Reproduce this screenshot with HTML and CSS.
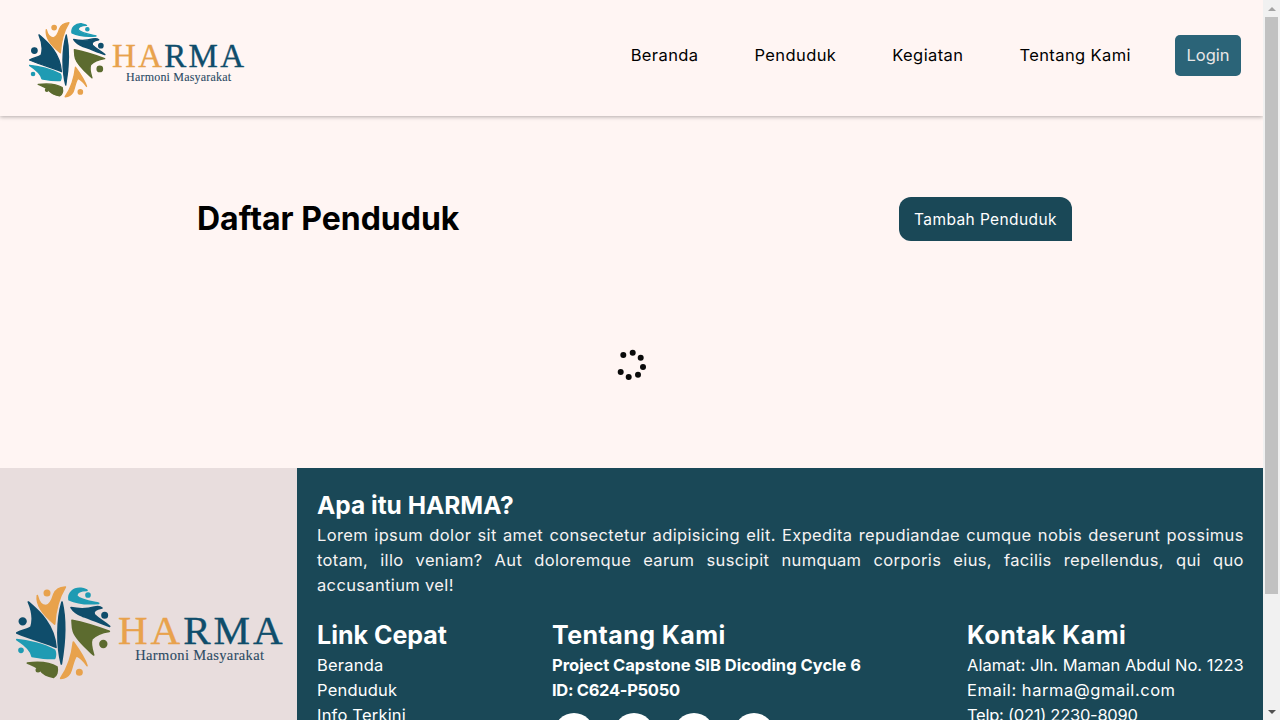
FILE: index.html
```html
<!DOCTYPE html>
<html lang="id">
<head>
<meta charset="utf-8">
<title>HARMA - Daftar Penduduk</title>
<link rel="stylesheet" href="styles.css">
</head>
<body>
<svg class="defs" width="0" height="0" aria-hidden="true">
  <symbol id="mark" viewBox="50 50 285 280">
    <g fill="#0f4d6b" stroke="#0f4d6b" stroke-width="5" stroke-linejoin="round">
      <path d="M188 97C198 140 202 190 186 283C172 230 172 150 188 97Z"/>
      <path d="M215 114C235 118 260 120 285 112C295 110 305 112 308 115C290 118 280 125 285 135C300 150 315 155 331 170C300 160 270 145 250 140C235 135 222 125 215 114Z"/>
      <path d="M87 97C120 125 165 165 170 233C140 220 100 210 52 190C65 182 85 180 95 172C102 150 97 120 87 97Z"/>
      <circle cx="316" cy="137" r="8"/><circle cx="70" cy="155" r="10"/>
    </g>
    <g fill="#e8a24c" stroke="#e8a24c" stroke-width="5" stroke-linejoin="round">
      <path d="M198 52C180 54 170 58 163 75C158 92 152 105 140 108C128 108 118 95 114 78C110 105 125 130 166 163C168 130 175 90 198 52Z"/>
      <path d="M222 217C235 235 255 262 263 288C255 275 240 262 232 258C222 268 218 300 212 310C205 322 195 325 184 326C205 295 218 255 222 217Z"/>
      <circle cx="143" cy="70" r="8"/><circle cx="240" cy="308" r="8"/>
    </g>
    <g fill="#1f9bb3" stroke="#1f9bb3" stroke-width="5" stroke-linejoin="round">
      <path d="M209 90C206 70 222 54 245 56C255 58 262 60 263 62C245 62 232 68 232 78C240 90 270 95 298 101C265 104 230 100 209 90Z"/>
      <path d="M52 210C85 212 135 225 166 242C170 250 168 262 166 266C140 268 110 262 98 260C95 245 80 228 52 210Z"/>
      <circle cx="266" cy="76" r="6"/><circle cx="65" cy="242" r="6"/>
    </g>
    <g fill="#5c6b2f" stroke="#5c6b2f" stroke-width="5" stroke-linejoin="round">
      <path d="M218 152C250 158 290 170 330 185C310 188 290 195 278 208C272 222 278 240 283 256C260 235 230 210 222 185C218 172 219 160 218 152Z"/>
      <path d="M84 280C110 277 150 277 173 292C176 305 172 318 163 323C145 320 132 316 120 298C108 290 95 285 84 280Z"/>
      <circle cx="312" cy="223" r="10"/><circle cx="116" cy="301" r="5"/>
    </g>
  </symbol>
</svg>

<header class="site-header">
  <a class="logo logo-small" href="#">
    <svg class="logo-mark"><use href="#mark"/></svg>
    <span class="logo-text">
      <span class="logo-name"><span class="logo-ha">HA</span>RMA</span>
      <span class="logo-tag">Harmoni Masyarakat</span>
    </span>
  </a>
  <nav class="nav">
    <a href="#">Beranda</a>
    <a href="#">Penduduk</a>
    <a href="#">Kegiatan</a>
    <a href="#">Tentang Kami</a>
    <button class="login">Login</button>
  </nav>
</header>

<main class="main">
  <div class="title-row">
    <h1>Daftar Penduduk</h1>
    <button class="add">Tambah Penduduk</button>
  </div>
  <div class="spinner-wrap">
    <svg class="spinner" width="32" height="32" viewBox="0 0 32 32" fill="#0a0a0a">
      <circle cx="8.3" cy="7" r="3"/>
      <circle cx="17.7" cy="4.7" r="3"/>
      <circle cx="25.7" cy="9.7" r="3"/>
      <circle cx="28" cy="19" r="3"/>
      <circle cx="23" cy="26.7" r="3"/>
      <circle cx="13.7" cy="29" r="3"/>
      <circle cx="5.7" cy="24" r="3"/>
    </svg>
  </div>
</main>

<footer class="footer">
  <div class="footer-left">
    <a class="logo logo-large" href="#">
      <svg class="logo-mark"><use href="#mark"/></svg>
      <span class="logo-text">
        <span class="logo-name"><span class="logo-ha">HA</span>RMA</span>
        <span class="logo-tag">Harmoni Masyarakat</span>
      </span>
    </a>
  </div>
  <div class="footer-right">
    <h2 class="about-title">Apa itu HARMA?</h2>
    <p class="about">Lorem ipsum dolor sit amet consectetur adipisicing elit. Expedita repudiandae cumque nobis deserunt possimus totam, illo veniam? Aut doloremque earum suscipit numquam corporis eius, facilis repellendus, qui quo accusantium vel!</p>
    <div class="cols">
      <div class="col col-links">
        <h2 class="tight">Link Cepat</h2>
        <a href="#">Beranda</a>
        <a href="#">Penduduk</a>
        <a href="#">Info Terkini</a>
        <a href="#">Tentang Kami</a>
      </div>
      <div class="col col-about">
        <h2>Tentang Kami</h2>
        <strong>Project Capstone SIB Dicoding Cycle 6</strong>
        <strong class="project-id">ID: C624-P5050</strong>
        <div class="socials">
          <span class="social"></span><span class="social"></span><span class="social"></span><span class="social"></span>
        </div>
      </div>
      <div class="col col-contact">
        <h2>Kontak Kami</h2>
        <span>Alamat: Jln. Maman Abdul No. 1223</span>
        <span class="email">Email: harma@gmail.com</span>
        <span class="phone">Telp: (021) 2230-8090</span>
      </div>
    </div>
  </div>
</footer>

<aside class="scrollbar" aria-hidden="true">
  <div class="sb-btn"><span class="arrow-up"></span></div>
  <div class="sb-track"><div class="sb-thumb"></div></div>
  <div class="sb-btn"><span class="arrow-down"></span></div>
</aside>
</body>
</html>
```

FILE: styles.css
```css
* { box-sizing: border-box; }
html { background: #fff5f3; }
body {
  margin: 0 17px 0 0;
  font-family: Inter, "Open Sans", sans-serif;
  color: #000;
  background: #fff5f3;
}
a { color: inherit; text-decoration: none; }
.defs { display: block; height: 0; }

.scrollbar {
  position: fixed;
  top: 0;
  right: 0;
  bottom: 0;
  width: 17px;
  display: flex;
  flex-direction: column;
  background: #f1f1f1;
}
.sb-btn { height: 17px; flex: none; display: flex; align-items: center; justify-content: center; }
.sb-track { flex: 1; padding: 0 2px; }
.sb-thumb { height: 577px; background: #c1c1c1; }
.arrow-up { border: 4px solid transparent; border-top: 0; border-bottom: 4px solid #a3a3a3; }
.arrow-down { border: 4px solid transparent; border-bottom: 0; border-top: 4px solid #505050; }

.site-header {
  height: 116px;
  padding: 0 22px 0 29px;
  display: flex;
  align-items: center;
  justify-content: space-between;
  background: #fff5f3;
  box-shadow: 0 1px 4px rgba(0, 0, 0, .3);
  position: relative;
}
.logo { display: flex; align-items: center; }
.logo-mark { filter: blur(.3px); }
.logo-text { display: flex; flex-direction: column; align-items: center; font-family: "Liberation Serif", serif; }
.logo-name { color: #0f4d6b; white-space: nowrap; -webkit-text-stroke: .35px currentColor; }
.logo-ha { color: #e8a24c; }
.logo-tag { color: #2b4a63; white-space: nowrap; line-height: 1; -webkit-text-stroke: .1px currentColor; }
.logo-small .logo-mark { width: 77px; height: 76px; margin-top: 3px; }
.logo-small .logo-text { margin-left: 6px; margin-top: 8px; }
.logo-small .logo-name { font-size: 33px; line-height: 28px; letter-spacing: 2.3px; }
.logo-small .logo-tag { font-size: 12px; letter-spacing: .2px; margin: 1px 1px 0 0; }
.logo-large .logo-mark { width: 95px; height: 94px; }
.logo-large .logo-text { margin-left: 7px; margin-top: 9px; }
.logo-large .logo-name { font-size: 41px; line-height: 35px; letter-spacing: 3px; }
.logo-large .logo-tag { font-size: 14.5px; letter-spacing: .35px; margin: 0 4px 0 0; }

.nav { display: flex; align-items: center; gap: 56px; font-size: 16.5px; letter-spacing: .4px; padding-bottom: 6px; }
.login {
  margin-left: -12px;
  width: 66px;
  height: 41px;
  border: 0;
  border-radius: 5px;
  background: #2b6478;
  color: #e9e6e6;
  font: 16.5px Inter, sans-serif;
}

.main { height: 352px; display: flex; flex-direction: column; }
.title-row {
  margin: 81px 191px 0 197px;
  display: flex;
  align-items: center;
  justify-content: space-between;
}
h1 { margin: 0; font-size: 32px; font-weight: 700; line-height: 42px; }
.add {
  width: 173px;
  height: 44px;
  border: 0;
  border-radius: 12px 12px 0 12px;
  background: #1a4857;
  color: #fff;
  font: 15.5px Inter, sans-serif;
  letter-spacing: .4px;
}
.spinner-wrap { margin-top: 107px; display: flex; justify-content: center; padding-right: 1px; }

.footer { display: flex; height: 388px; overflow: hidden; }
.footer-left { width: 297px; flex: none; background: #e8dddd; padding: 118px 0 0 16px; }
.footer-right { flex: 1; background: #1a4857; color: #fff; padding: 19px 20px 0; font-size: 16.5px; line-height: 25px; }
h2 { margin: 0; font-size: 25px; font-weight: 700; line-height: 35px; letter-spacing: .45px; }
h2.tight { letter-spacing: 0; }
.about-title { font-size: 24.5px; letter-spacing: 0; line-height: 36px; }
.about { margin: 0 0 20px; text-align: justify; color: #f6f3f3; letter-spacing: .35px; }
.cols { display: flex; }
.col { display: flex; flex-direction: column; align-items: flex-start; }
.col-links { width: 235px; letter-spacing: .2px; }
.col-about { width: 415px; }
.col-about strong { font-weight: 700; }
.col-about .project-id { letter-spacing: -.3px; }
.col-contact { white-space: nowrap; }
.col-contact .email { letter-spacing: .55px; }
.col-contact .phone { letter-spacing: -.25px; }
.socials { display: flex; gap: 20px; margin-top: 10px; padding-left: 2px; }
.social { width: 40px; height: 40px; border-radius: 50%; background: #fff; }
```
